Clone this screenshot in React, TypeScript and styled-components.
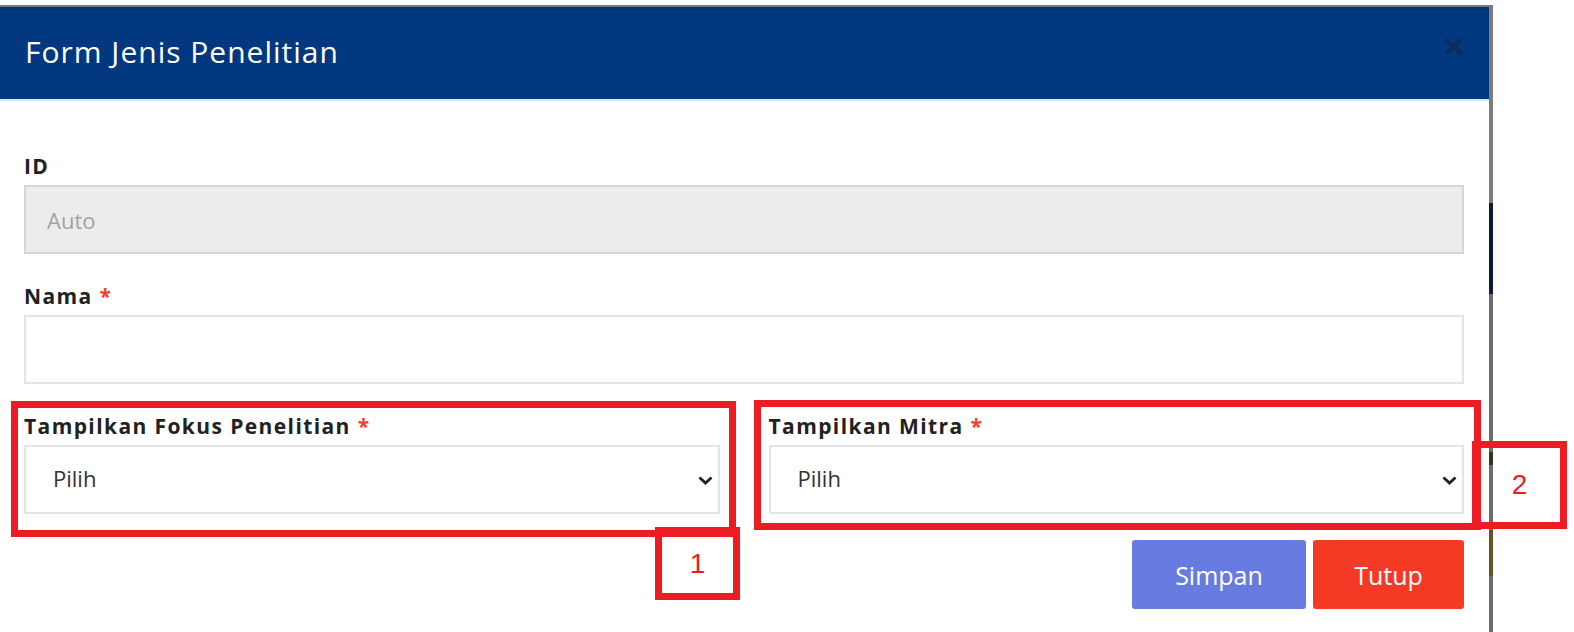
import styled, { createGlobalStyle } from "styled-components";

const GlobalStyle = createGlobalStyle`
  body {
    margin: 0;
    background: #ffffff;
    font-family: "Open Sans", "Liberation Sans", sans-serif;
  }
`;

function ChevronDown() {
  return (
    <Chevron width="15" height="9" viewBox="0 0 15 9">
      <path d="M1.5 1.5 L7.5 7 L13.5 1.5" fill="none" stroke="#222" strokeWidth="2.8" />
    </Chevron>
  );
}

function CloseIcon() {
  return (
    <svg width="19" height="17" viewBox="0 0 19 17">
      <path d="M3 2.5 L16 14.5 M16 2.5 L3 14.5" stroke="#0d2c5e" strokeWidth="4.2" strokeLinecap="square" />
    </svg>
  );
}

interface ISelectField {
  label: string;
}

function SelectField({ label }: ISelectField) {
  return (
    <Field>
      <Label>
        {label} <Required>*</Required>
      </Label>
      <SelectWrap>
        <Select defaultValue="">
          <option value="">Pilih</option>
        </Select>
        <ChevronDown />
      </SelectWrap>
    </Field>
  );
}

export default function App() {
  return (
    <>
      <GlobalStyle />
      <Page>
        <Modal>
          <ModalMain>
            <Header>
              <Title>Form Jenis Penelitian</Title>
              <CloseButton type="button" aria-label="Close">
                <CloseIcon />
              </CloseButton>
            </Header>
            <FormBody>
              <Field>
                <Label>ID</Label>
                <Input placeholder="Auto" disabled />
              </Field>
              <Field>
                <Label>
                  Nama <Required>*</Required>
                </Label>
                <Input />
              </Field>
              <Row>
                <SelectField label="Tampilkan Fokus Penelitian" />
                <SelectField label="Tampilkan Mitra" />
              </Row>
              <Actions>
                <Button $variant="save">Simpan</Button>
                <Button $variant="close">Tutup</Button>
              </Actions>
            </FormBody>
          </ModalMain>
          <Edge />
        </Modal>

        <Marker $left={11} $top={401} $width={725} $height={136} />
        <Marker $left={655} $top={527} $width={85} $height={73}>
          1
        </Marker>
        <Marker $left={754} $top={400} $width={727} $height={130} />
        <Marker $left={1472} $top={441} $width={95} $height={88}>
          2
        </Marker>
      </Page>
    </>
  );
}

const Page = styled.div`
  position: relative;
  padding-top: 5px;
  height: 627px;
  overflow: hidden;
`;

const Modal = styled.div`
  display: flex;
  width: 1493px;
  height: 100%;
  border-top: 2px solid #7a7a7a;
`;

const ModalMain = styled.div`
  flex: 1;
  display: flex;
  flex-direction: column;
  background: #ffffff;
`;

const Edge = styled.div`
  width: 4px;
  background: linear-gradient(
    to bottom,
    #7b7b7b 0px,
    #7b7b7b 196px,
    #0b1b3b 196px,
    #0b1b3b 287px,
    #6d6d6d 287px,
    #6d6d6d 445px,
    #3e3120 445px,
    #3e3120 458px,
    #6d6d6d 458px,
    #6d6d6d 523px,
    #6b5120 523px,
    #6b5120 569px,
    #6d6d6d 569px
  );
`;

const Header = styled.header`
  display: flex;
  align-items: center;
  justify-content: space-between;
  height: 92px;
  padding: 0 26px 0 25px;
  background: #02387f;
  border-bottom: 2px solid #dfe3ea;
`;

const Title = styled.h1`
  margin: 0 0 4px;
  font-size: 30px;
  font-weight: 400;
  color: #ffffff;
  letter-spacing: 1px;
`;

const CloseButton = styled.button`
  align-self: flex-start;
  margin-top: 31px;
  padding: 0;
  border: 0;
  background: none;
  line-height: 0;
`;

const FormBody = styled.form`
  display: flex;
  flex-direction: column;
  gap: 30px;
  padding: 53px 25px 0 24px;
`;

const Field = styled.div`
  display: flex;
  flex-direction: column;
  gap: 6px;
  min-width: 0;
`;

const Label = styled.label`
  height: 25px;
  font-size: 21px;
  line-height: 25px;
  font-weight: 700;
  color: #212121;
  letter-spacing: 1.4px;
  white-space: nowrap;
`;

const Required = styled.span`
  color: #f33e2b;
  letter-spacing: 0;
`;

const Input = styled.input`
  box-sizing: border-box;
  width: 100%;
  height: 69px;
  padding: 0 21px;
  font-family: inherit;
  font-size: 22px;
  color: #333;
  background: #ffffff;
  border: 2px solid #e4e4e4;
  outline: none;

  &:disabled {
    background: #ececec;
    border-color: #d6d6d6;
  }

  &::placeholder {
    color: #a3a3a3;
  }
`;

const Row = styled.div`
  display: grid;
  grid-template-columns: 1fr 1fr;
  column-gap: 49px;
`;

const SelectWrap = styled.div`
  position: relative;
`;

const Select = styled.select`
  box-sizing: border-box;
  width: 100%;
  height: 69px;
  padding: 0 40px 4px 27px;
  appearance: none;
  font-family: inherit;
  font-size: 22px;
  color: #333;
  background: #ffffff;
  border: 2px solid #e4e4e4;
  border-radius: 0;
  outline: none;
`;

const Chevron = styled.svg`
  position: absolute;
  right: 7px;
  top: 31px;
  pointer-events: none;
`;

const Actions = styled.div`
  display: flex;
  justify-content: flex-end;
  gap: 7px;
  margin-top: -4px;
`;

const Button = styled.button<{ $variant: "save" | "close" }>`
  height: 69px;
  width: ${(p) => (p.$variant === "save" ? "174px" : "151px")};
  border: 0;
  border-radius: 3px;
  font-family: inherit;
  font-size: 25px;
  color: #ffffff;
  background: ${(p) => (p.$variant === "save" ? "#677be0" : "#f43a25")};
`;

const Marker = styled.div<{ $left: number; $top: number; $width: number; $height: number }>`
  position: absolute;
  left: ${(p) => p.$left}px;
  top: ${(p) => p.$top}px;
  width: ${(p) => p.$width}px;
  height: ${(p) => p.$height}px;
  box-sizing: border-box;
  border: 7px solid #ed1c24;
  display: flex;
  align-items: center;
  justify-content: center;
  font-family: "Liberation Sans", sans-serif;
  font-size: 28px;
  color: #ed1c24;
`;
